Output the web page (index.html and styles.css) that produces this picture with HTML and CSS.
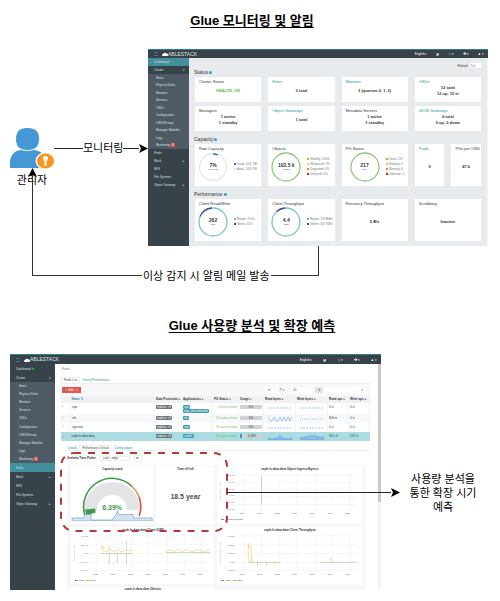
FILE: index.html
```html
<!DOCTYPE html>
<html lang="en">
<head>
<meta charset="utf-8">
<title>Glue</title>
<meta name="viewport" content="width=device-width, initial-scale=1">
<link rel="stylesheet" href="styles.css">
</head>
<body>
<section class="scene">
  <h1 class="heading" lang="ko">Glue 모니터링 및 알림</h1>
  <div class="alerting">
    <div class="actor">
      <svg class="person" viewBox="0 0 46 42" aria-hidden="true">
        <path fill="#4697d5" d="M1 41V36C1 28 5 24 12 23H25Q32 24 36 29V41Z"/>
        <path fill="#4697d5" stroke="#fff" d="M6.500 12C6.500 4 11 .5 18.500 .5S30.500 4 30.500 12 26 23.500 18.500 23.500 6.500 20 6.500 12Z"/>
        <ellipse cx="36" cy="34" rx="9.500" ry="8.500" fill="#fff"/>
        <ellipse cx="36.500" cy="34" rx="8.600" ry="7.400" fill="#fa961f"/>
        <path fill="#fff" d="M36.500 29a2.600 2.600 0 0 1 1 5V39H35.500V34a2.600 2.600 0 0 1 1-5Z"/>
      </svg>
      <span class="name" lang="ko">관리자</span>
    </div>
    <div class="flow"><i class="line"></i><span lang="ko">모니터링</span><i class="line"></i><svg class="head" viewBox="0 0 9 9"><path d="M0 0L9 4.500 0 9 2 4.500Z"/></svg></div>
    <div class="app app-status">
      <header class="topbar"><button class="burger" aria-label="Menu"></button><svg class="cloud" viewBox="0 0 12 8"><path fill="#fff" d="M2 8a2 2 0 0 1 0-4 4 4 0 0 1 7-1 2.500 2.500 0 0 1 1 5Z"/></svg><b class="brand">ABLESTACK</b><nav class="tools"><a href="#">English ▾</a><a href="#">◪</a><a href="#">◎ ▾</a><a href="#">✿ ▾</a><a href="#">♟ ▾</a></nav></header>
      <div class="body">
        <nav class="side">
          <a class="on" href="#">Dashboard <em>♥</em></a><a href="#">Cluster<i>▾</i></a>
          <div class="sub"><a href="#">Hosts</a><a href="#">Physical Disks</a><a href="#">Monitors</a><a href="#">Services</a><a href="#">OSDs</a><a href="#">Configuration</a><a href="#">CRUSH map</a><a href="#">Manager Modules</a><a href="#">Logs</a><a href="#">Monitoring <mark>8</mark></a></div>
          <a href="#">Pools</a><a href="#">Block<i>▸</i></a><a href="#">NFS</a><a href="#">File Systems</a><a href="#">Object Gateway<i>▸</i></a>
        </nav>
        <main class="status">
          <label class="refresh">Refresh <select><option>5 s</option></select></label>
          <h2>Status<em></em></h2>
          <div class="cards">
            <article><h3>Cluster Status</h3><p class="ok">HEALTH_OK</p></article>
            <article><h3><a href="#">Hosts</a></h3><p>3 total</p></article>
            <article><h3><a href="#">Monitors</a></h3><p>3 (quorum 0, 1, 2)</p></article>
            <article><h3><a href="#">OSDs</a></h3><p>12 total<br>12 up, 12 in</p></article>
            <article><h3>Managers</h3><p>1 active<br>1 standby</p></article>
            <article><h3><a href="#">Object Gateways</a></h3><p>1 total</p></article>
            <article><h3>Metadata Servers</h3><p>1 active<br>1 standby</p></article>
            <article><h3><a href="#">iSCSI Gateways</a></h3><p>0 total<br>0 up, 0 down</p></article>
          </div>
          <h2 class="gap">Capacity<em></em></h2>
          <div class="cards tall">
            <article><h3>Raw Capacity</h3><div class="meter"><svg viewBox="0 0 30 30"><circle class="ring" cx="15" cy="15" r="13.500" stroke="#e6e8ea"/><path class="ring" stroke="#2b6fe0" stroke-width="2" d="M15 2a13 13 0 0 1 5 1"/></svg><b>7%<small>of 58.9 TiB</small></b><ul><li class="blue">Used: 4.01 TiB</li><li class="pale">Avail.: 54.9 TiB</li></ul></div></article>
            <article><h3>Objects</h3><div class="meter"><svg viewBox="0 0 30 30"><circle class="ring" cx="15" cy="15" r="14" stroke="#8dc97c"/></svg><b>102.5 k<small>objects</small></b><ul><li class="green">Healthy: 100%</li><li class="yellow">Misplaced: 0%</li><li class="orange">Degraded: 0%</li><li class="red">Unfound: 0%</li></ul></div></article>
            <article><h3>PG Status</h3><div class="meter inset"><svg viewBox="0 0 30 30"><circle class="ring" cx="15" cy="15" r="14" stroke="#8dc97c"/></svg><b>217<small>PGs</small></b><ul><li class="green">Clean: 217</li><li class="yellow">Working: 0</li><li class="orange">Warning: 0</li><li class="red">Unknown: 0</li></ul></div></article>
            <div class="pair"><article><h3><a href="#">Pools</a></h3><p>9</p></article><article><h3>PGs per OSD</h3><p>47.6</p></article></div>
          </div>
          <h2 class="gap">Performance<em></em></h2>
          <div class="cards tall">
            <article><h3>Client Read/Write</h3><div class="meter"><svg viewBox="0 0 30 30"><circle class="ring" cx="15" cy="15" r="14" stroke="#78c5cc"/><path class="ring" stroke="#484aa8" d="M2 9.500A14 14 0 0 1 14 1"/></svg><b>262<small>IOPS</small></b><ul><li class="teal">Reads: 215/s</li><li class="navy">Writes: 47/s</li></ul></div></article>
            <article><h3>Client Throughput</h3><div class="meter"><svg viewBox="0 0 30 30"><circle class="ring" cx="15" cy="15" r="14" stroke="#78c5cc"/><path class="ring" stroke="#484aa8" d="M5.500 4.500A14 14 0 0 1 14 1"/></svg><b>4.4<small>MiB/s</small></b><ul><li class="teal">Reads: 3.9 MiB/s</li><li class="navy">Writes: 507 KiB/s</li></ul></div></article>
            <article><h3>Recovery Throughput</h3><p>0 B/s</p></article>
            <article><h3>Scrubbing</h3><p>Inactive</p></article>
          </div>
        </main>
      </div>
    </div>
    <div class="elbow"><span lang="ko">이상 감지 시 알림 메일 발송</span><svg class="head up" viewBox="0 0 9 9"><path d="M0 9L4.500 0 9 9 4.500 7Z"/></svg></div>
  </div>
</section>

<section class="scene second">
  <h1 class="heading" lang="ko">Glue 사용량 분석 및 확장 예측</h1>
  <div class="forecast">
    <div class="app app-pools">
      <header class="topbar"><button class="burger" aria-label="Menu"></button><svg class="cloud" viewBox="0 0 12 8"><path fill="#fff" d="M2 8a2 2 0 0 1 0-4 4 4 0 0 1 7-1 2.500 2.500 0 0 1 1 5Z"/></svg><b class="brand">ABLESTACK</b><nav class="tools"><a href="#">English ▾</a><a href="#">◪</a><a href="#">◎ ▾</a><a href="#">✿ ▾</a><a href="#">♟ ▾</a></nav></header>
      <div class="body">
        <nav class="side">
          <a href="#">Dashboard <em>♥</em></a><a href="#">Cluster<i>▾</i></a>
          <div class="sub"><a href="#">Hosts</a><a href="#">Physical Disks</a><a href="#">Monitors</a><a href="#">Services</a><a href="#">OSDs</a><a href="#">Configuration</a><a href="#">CRUSH map</a><a href="#">Manager Modules</a><a href="#">Logs</a><a href="#">Monitoring <mark>8</mark></a></div>
          <a class="on" href="#">Pools</a><a href="#">Block<i>▸</i></a><a href="#">NFS</a><a href="#">File Systems</a><a href="#">Object Gateway<i>▸</i></a>
        </nav>
        <main class="pools">
          <p class="crumb">Pools</p>
          <nav class="tabs"><a class="current" href="#">Pools List</a><a href="#">Overall Performance</a></nav>
          <div class="toolbar"><button class="edit">✎ Edit &nbsp; ▾</button><span class="space"></span><button>⟳</button><button>▦ ▾</button><input class="count" aria-label="Rows" value="10"><span class="find"><label for="q">⚲</label><input id="q"><button aria-label="Clear">✕</button></span></div>
          <table>
            <colgroup><col class="c-x"><col class="c-name"><col class="c-prot"><col class="c-app"><col class="c-pg"><col class="c-use"><col class="c-chart"><col class="c-chart"><col class="c-op"><col class="c-op"></colgroup>
            <thead><tr><th></th><th class="sorted">Name ⇅</th><th>Data Protection ♦</th><th>Applications ♦</th><th>PG Status ♦</th><th>Usage ♦</th><th>Read bytes ♦</th><th>Write bytes ♦</th><th>Read ops ♦</th><th>Write ops ♦</th></tr></thead>
            <tbody>
              <tr><td>›</td><td>.rgw</td><td><span class="tag gray">replica: ×3</span></td><td><span class="tag">rgw</span><span class="tag">mgr_devicehealth</span></td><td class="good">1 active+clean</td><td><span class="bar">0%</span></td><td><svg class="spark" viewBox="0 0 24 6"><path d="M0 3H24" stroke-dasharray="2 1"/></svg></td><td><svg class="spark" viewBox="0 0 24 6"><path d="M0 3H24" stroke-dasharray="2 1"/></svg></td><td>0 /s</td><td>0 /s</td></tr>
              <tr class="alt"><td>›</td><td>.nfs</td><td><span class="tag gray">replica: ×3</span></td><td><span class="tag">nfs</span></td><td class="good">32 active+clean</td><td><span class="bar">0%</span></td><td><svg class="spark" viewBox="0 0 24 6"><path d="M0 1L2 5 4 5 6 1 8 5 10 5 12 1 14 5 16 1 18 5 20 1 22 5 24 1"/></svg></td><td><svg class="spark" viewBox="0 0 24 6"><path d="M0 3H24" stroke-dasharray="1 1"/></svg></td><td>800 m</td><td>0 /s</td></tr>
              <tr><td>›</td><td>.rgw.root</td><td><span class="tag gray">replica: ×3</span></td><td><span class="tag">rgw</span></td><td class="good">32 active+clean</td><td><span class="bar">0%</span></td><td><svg class="spark" viewBox="0 0 24 6"><path d="M0 3H24" stroke-dasharray="2 1"/></svg></td><td><svg class="spark" viewBox="0 0 24 6"><path d="M0 3H24" stroke-dasharray="2 1"/></svg></td><td>0 /s</td><td>0 /s</td></tr>
              <tr class="picked"><td>⌄</td><td>ceph-fs.data.data</td><td><span class="tag gray">replica: ×3</span></td><td><span class="tag">cephfs</span></td><td class="good">32 active+clean</td><td><span class="bar used">6.39%</span></td><td><svg class="spark" viewBox="0 0 24 6"><path class="area" d="M0 6V4L4 5 7 4 10 4 12 1 14 4 17 4 19 5 24 4V6Z"/></svg></td><td><svg class="spark" viewBox="0 0 24 6"><path class="area" d="M0 6V4L5 3 8 3 10 1 12 3 14 1 17 3 20 3 22 4 24 2V6Z"/></svg></td><td>90.1 /s</td><td>127 /s</td></tr>
            </tbody>
          </table>
          <nav class="tabs inner"><a href="#">Details</a><a class="current" href="#">Performance Details</a><a href="#">Configuration</a></nav>
          <div class="picker"><label for="range">Grafana Time Picker</label><select id="range"><option>Last 7 days</option></select><button aria-label="Reset">⊞</button></div>
          <div class="grafana">
            <article class="panel gauge"><h3>Capacity used</h3>
              <svg viewBox="0 0 82 50"><path fill="none" stroke="#e4e4e4" stroke-width="13" d="M19.500 39A21.500 21.500 0 1 1 62.500 39"/><path fill="none" stroke="#429b4d" stroke-width="1.600" d="M14 45A28.500 28.500 0 0 1 61 15.500"/><path fill="none" stroke="#e7914b" stroke-width="1.600" d="M61 15.500A28.500 28.500 0 0 1 68 26"/><path fill="none" stroke="#d0553f" stroke-width="1.600" d="M68 26A28.500 28.500 0 0 1 68 45"/><path fill="#429b4d" d="M14 38.500L24 37.500 24.500 41.500 15 44.500Z"/><path fill="#d3e3f3" stroke="#6796c9" stroke-width=".600" d="M1 50V47H13V43.500H20V49H42V47L45 44 46 40 48 43.500H62V47H81V50Z"/><text x="41" y="39">6.39%</text></svg></article>
            <article class="panel"><h3>Time till full</h3><p class="figure">18.5 year</p></article>
            <article class="panel wide"><h3>ceph-fs.data.data Object Ingress/Egress</h3>
              <div class="plot"><span class="axis">Objects out(-) / in(+)</span><ol><li>150 ops</li><li>100 ops</li><li>50 ops</li><li>0 ops</li><li>-50 ops</li><li>-100 ops</li></ol><svg viewBox="0 0 120 40" preserveAspectRatio="none"><path class="mesh" d="M0 1H120M0 9H120M0 17H120M0 25H120M0 33H120M9 0V40M26 0V40M44 0V40M61 0V40M79 0V40M96 0V40M113 0V40"/><path class="g" d="M26 3V33"/></svg></div>
              <div class="ticks"><span>11/20</span><span>12:00</span><span>11/22</span><span>12:00</span><span>11/24</span><span>12:00</span><span>11/26</span></div><div class="legend"><span class="l-g">Objects per second</span></div></article>
            <article class="panel half"><h3>ceph-fs.data.data Client IOPS</h3>
              <div class="plot"><span class="axis">IOPS out(-) / in(+)</span><ol><li>400 ops</li><li>200 ops</li><li>0 ops</li><li>-200 ops</li><li>-400 ops</li></ol><svg viewBox="0 0 120 40" preserveAspectRatio="none"><path class="mesh" d="M0 1H120M0 10H120M0 20H120M0 30H120M0 38H120M7 0V40M24 0V40M42 0V40M59 0V40M77 0V40M94 0V40M111 0V40"/><path class="g" d="M12 20H42M76 19H120M20 20V32M28 20V30M37 20V31"/><path class="y" d="M12 17V12H14V17L18 18 21 15 24 18 28 16 32 18 36 17H42M37 17V5M20 17V12M76 18L80 16 84 18 88 15 92 18 96 16 102 18 108 16 114 18 120 16"/></svg></div>
              <div class="ticks"><span>11/20</span><span>12:00</span><span>11/22</span><span>12:00</span><span>11/24</span><span>12:00</span><span>11/26</span></div><div class="legend"><span class="l-g">reads</span><span class="l-y">writes</span></div></article>
            <article class="panel half"><h3>ceph-fs.data.data Client Throughput</h3>
              <div class="plot"><span class="axis">Throughput out(-) / in(+)</span><ol><li>40 MB/s</li><li>20 MB/s</li><li>10 MB/s</li><li>0 B/s</li><li>-10 MB/s</li></ol><svg viewBox="0 0 120 40" preserveAspectRatio="none"><path class="mesh" d="M0 1H120M0 10H120M0 20H120M0 30H120M0 38H120M9 0V40M26 0V40M44 0V40M61 0V40M79 0V40M96 0V40M113 0V40"/><path class="g" d="M13 29.500H44M83 29.500H120M22 30V34M31 30V33M39 30V32"/><path class="y" d="M13 29V9L14 14 16 12V29M16 24V29M39 28V29M94 24V29"/></svg></div>
              <div class="ticks"><span>11/20</span><span>12:00</span><span>11/22</span><span>12:00</span><span>11/24</span><span>12:00</span><span>11/26</span></div><div class="legend"><span class="l-g">reads</span><span class="l-y">writes</span></div></article>
            <article class="panel half last"><h3>ceph-fs.data.data Objects</h3></article>
            <svg class="focus" aria-hidden="true"><rect x="2" y="2" rx="13"/></svg>
            <div class="pointer"><i class="line"></i><svg class="head" viewBox="0 0 9 9"><path d="M0 0L9 4.500 0 9 2 4.500Z"/></svg></div>
          </div>
        </main>
      </div>
    </div>
    <p class="outcome" lang="ko">사용량 분석을<br>통한 확장 시기<br>예측</p>
  </div>
</section>
</body>
</html>
```

FILE: styles.css
```css
* { box-sizing: border-box; }
body { margin: 0; background: #fff; color: #000; font-family: "Liberation Sans", "Noto Sans CJK KR", sans-serif; font-size: 11px; line-height: 14px; }
h1, h2, h3, p, ul, ol { margin: 0; padding: 0; list-style: none; font-weight: normal; }
a { color: inherit; text-decoration: none; }
svg { display: block; }
button, input, select { margin: 0; padding: 0; border: 0; font: inherit; color: inherit; background: none; appearance: none; min-width: 0; }
em { font-style: normal; }

.scene { padding-top: 13px; }
.second { padding-top: 72px; }
.heading { height: 36px; padding-left: 4px; text-align: center; font-size: 13px; line-height: 16px; font-weight: bold; text-decoration: underline; text-underline-offset: 2px; }
.alerting { position: relative; display: grid; grid-template-columns: 54px 94px 1fr; padding-right: 12px; }
.actor { padding: 78px 0 0 9px; }
.person { width: 46px; height: 42px; }
.name { display: block; width: 46px; padding-top: 4px; text-align: center; }
.flow { display: flex; align-items: center; align-self: start; margin-top: 92px; white-space: nowrap; }
.line { flex: 1; height: 1px; background: #222; }
.flow .line:first-child { flex: 0 0 29px; }
.head { width: 9px; height: 9px; flex: none; }
.elbow { position: absolute; left: 32px; right: 181px; top: 124px; bottom: -30px; border: solid #333; border-width: 0 0 1px 1px; }
.elbow::after { content: ""; position: absolute; right: 0; bottom: 0; height: 29px; border-right: 1px solid #333; }
.elbow span { position: absolute; left: 109px; bottom: -8px; background: #fff; white-space: nowrap; padding: 0 1px; }
.up { position: absolute; left: -5px; top: -5px; }

.app { min-width: 0; font-size: 3px; line-height: 4px; color: #333; overflow: hidden; }
.topbar { display: flex; align-items: center; height: 9px; padding: 0 4px 0 6px; background: #374249; border-top: 1px solid #2d7f8c; color: #fff; }
.burger { width: 4px; height: 4px; border: solid #33808d; border-width: 1px 0; margin-right: 4px; }
.cloud { width: 6px; height: 4px; }
.brand { font-size: 5px; line-height: 5px; font-weight: normal; color: #dce3e6; }
.tools { display: flex; gap: 9px; margin-left: auto; }
.body { display: flex; }
.side { flex: 0 0 41px; background: #374249; color: #dbe0e3; }
.side a { display: flex; align-items: center; height: 8px; padding: 0 4px 0 6px; white-space: nowrap; }
.side i { margin-left: auto; font-style: normal; }
.side em { color: #44c63f; margin-left: 1px; font-size: 4px; }
.side .on { background: #428f9d; }
.sub { display: grid; grid-auto-rows: 1fr; height: 75px; background: #4e5b64; }
.sub a { height: auto; padding-left: 8px; }
.sub mark { margin-left: 1px; padding: 0 1px; background: #e0524c; color: #fff; }

.status { flex: 1; min-width: 0; padding: 5px 6px 5px 6px; background: #e8ebee; border-right: 1px solid #f4f5f6; }
.refresh { display: flex; justify-content: flex-end; align-items: center; gap: 2px; height: 5px; }
.refresh select { width: 11px; height: 5px; padding-left: 1px; background: #fff; }
.status h2 { height: 9px; margin-left: -1px; padding-top: 2px; font-size: 5px; line-height: 5px; }
.status h2.gap { height: 13px; padding-top: 6px; }
.status h2 em { display: inline-block; width: 3px; height: 3px; margin-left: 1px; border-radius: 50%; background: #38a0b0; }
.cards { display: grid; grid-template-columns: repeat(4, minmax(0, 1fr)); grid-auto-rows: 25px; gap: 4px 7px; }
.tall { grid-auto-rows: 42px; }
.status article { display: flex; flex-direction: column; min-width: 0; padding: 3px 4px; background: #fff; white-space: nowrap; }
.status h3 { font-size: 4px; line-height: 4px; }
.status h3 a { color: #2693a5; }
.status article p { flex: 1; display: grid; place-content: center; padding-bottom: 1px; text-align: center; font-size: 4px; line-height: 6px; font-weight: bold; }
.status .ok { color: #4cbf43; }
.pair { display: grid; grid-template-columns: 1fr 1fr; gap: 7px; }
.meter { display: grid; grid-template-columns: 30px 1fr; align-items: center; gap: 6px; margin: 0 -4px 0 -1px; }
.inset { margin-left: 4px; }
.meter svg { width: 30px; height: 30px; grid-area: 1 / 1; margin-top: 1px; }
.meter b { grid-area: 1 / 1; text-align: center; font-size: 5px; line-height: 5px; }
.meter small { display: block; font-size: 2px; line-height: 3px; font-weight: normal; }
.meter ul { font-size: 3px; line-height: 5px; color: #777; }
.meter li::before { content: ""; display: inline-block; width: 2px; height: 2px; margin-right: 1px; background: currentColor; }
.ring { fill: none; stroke-width: 1.3; }
.blue::before { color: #2b6fe0; } .pale::before { color: #ddd; } .green::before { color: #7cc464; } .yellow::before { color: #f4cc56; } .orange::before { color: #ed8937; } .red::before { color: #cf1f1f; } .teal::before { color: #5dbac3; } .navy::before { color: #40409f; }

.forecast { display: grid; grid-template-columns: 1fr 119px; padding-left: 10px; align-items: start; }
.app-pools { overflow: visible; }
.app-pools .topbar { height: 10px; }
.app-pools .tools { gap: 11px; }
.app-pools .side { flex-basis: 45px; }
.app-pools .side a { height: 9px; }
.app-pools .sub { height: 81px; }
.app-pools .sub a { height: auto; padding-left: 9px; }
.pools { flex: 1; min-width: 0; height: 226px; padding: 3px 8px 0 6px; border-right: 3px solid #ededed; border-image: linear-gradient(#c9c9c9 61%, #f4f4f4 61%) 1; border-width: 0 3px 0 0; }
.crumb { height: 10px; padding-left: 1px; color: #777; }
.tabs { display: flex; height: 7px; border-bottom: 1px solid #eceef0; color: #2693a5; }
.tabs a { padding: 1px 2px; }
.tabs .current { color: #444; border: 1px solid #eceef0; border-bottom: 0; padding: 0 2px; background: #fff; }
.toolbar { display: flex; align-items: center; gap: 4px; height: 12px; padding: 0 4px 0 1px; background: #f7f8f9; }
.toolbar button, .toolbar input { height: 6px; padding: 0 2px; background: #fff; line-height: 6px; }
.toolbar .edit { width: 19px; background: #de5750; color: #fff; }
.space { flex: 1; }
.toolbar .count { width: 20px; }
.find { display: flex; line-height: 6px; }
.find label { width: 8px; background: #e2e4e6; text-align: center; }
.find input { width: 36px; }
table { width: 100%; table-layout: fixed; border-collapse: collapse; }
.c-x { width: 9px; } .c-prot { width: 27px; } .c-app { width: 31px; } .c-pg { width: 26px; } .c-use { width: 25px; } .c-chart { width: 32px; } .c-op { width: 21px; }
th, td { padding: 1px; text-align: left; vertical-align: top; white-space: nowrap; overflow: hidden; border-right: 1px solid #f3f3f3; }
th { height: 7px; background: #eff1f3; font-size: 3px; line-height: 4px; }
.sorted { color: #2693a5; }
td { height: 9px; padding-top: 2px; }
.alt { background: #f7f8f9; }
.picked { background: #aadce2; }
.picked td { border-color: #aadce2; }
.tag { float: left; clear: left; padding: 0 1px; background: #3f9bab; color: #fff; border-radius: 1px; }
.gray { background: #6c747b; }
.good { color: #5cc451; text-align: right; }
.bar { display: block; background: #cfd3d7; text-align: center; }
.used { border-left: 2px solid #3d97a7; }
.spark { width: 24px; height: 6px; margin-left: 3px; fill: none; stroke: #609fe8; stroke-width: .6; }
.area { fill: #84c1e4; }
.inner { margin: 4px 0 0 5px; height: 6px; }
.picker { display: flex; align-items: center; height: 14px; padding-left: 6px; gap: 4px; }
.picker label { font-weight: bold; }
.picker select { width: 30px; height: 5px; padding: 0 2px; border: 1px solid #eee; line-height: 3px; }
.picker button { width: 8px; line-height: 5px; border: 1px solid #eee; }
.grafana { position: relative; display: grid; grid-template-columns: 82fr 58fr 144fr; grid-template-rows: 58px 57px 4px; gap: 3px; margin: 0 4px 0 6px; padding: 1px 4px; background: #f5f7f9; }
.panel { min-width: 0; padding-top: 1px; background: #fff; }
.panel h3 { text-align: center; font-size: 3px; line-height: 4px; font-weight: bold; white-space: nowrap; }
.half:not(:nth-of-type(5)) { grid-column: span 2; }
.last { overflow: hidden; padding-top: 0; }
.gauge svg { width: 100%; height: 50px; }
.gauge text { font-size: 7px; font-weight: bold; fill: #429b4d; text-anchor: middle; }
.figure { padding-top: 22px; text-align: center; font-size: 7px; line-height: 8px; font-weight: bold; color: #4b5056; }
.plot { display: flex; height: 40px; padding: 3px 4px 0 2px; color: #777; font-size: 2px; line-height: 3px; }
.axis { writing-mode: vertical-rl; transform: rotate(180deg); text-align: center; width: 4px; }
.plot ol { display: flex; flex-direction: column; justify-content: space-between; width: 12px; text-align: right; padding-right: 1px; white-space: nowrap; }
.plot svg { flex: 1; min-width: 0; height: 37px; }
.mesh { fill: none; stroke: #ececec; stroke-width: .5; }
.g, .y { fill: none; stroke: #7fb56b; stroke-width: .6; opacity: .8; }
.y { stroke: #e7b252; }
.ticks { display: flex; justify-content: space-between; padding: 0 12px 0 22px; font-size: 2px; color: #555; }
.legend { display: flex; gap: 2px; padding: 2px 4px; font-size: 2px; }
.legend span::before { content: ""; display: inline-block; width: 3px; height: 1px; margin-right: 1px; vertical-align: middle; background: #5fa852; }
.legend .l-y::before { background: #e5a63c; }
.focus { position: absolute; left: -8px; top: -14px; width: 170px; height: 82px; }
.focus rect { width: 166px; height: 78px; fill: none; stroke: #b33a38; stroke-width: 2; stroke-dasharray: 7 7; }
.pointer { position: absolute; left: 160px; right: -34px; top: 23px; display: flex; align-items: center; }
.outcome { padding: 118px 0 0 5px; text-align: center; }
```
